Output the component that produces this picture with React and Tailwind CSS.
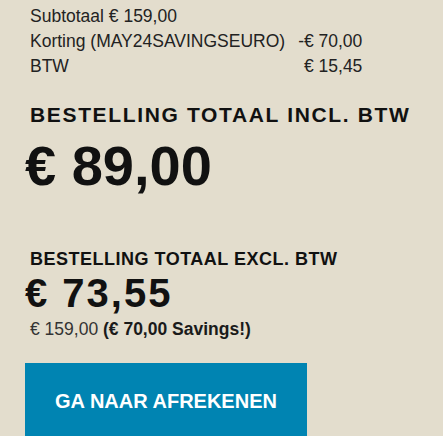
export default function App() {
  return (
    <div
      className="w-full h-[436px] overflow-hidden bg-[#e3ddcd] pl-[25px] text-[#1a1a1a]"
      style={{ fontFamily: '"Liberation Sans", Arial, sans-serif' }}
    >
      <div className="pl-[5px] pt-[4px] grid grid-cols-[auto_auto] w-max text-[17.5px] leading-[25px] text-[#222]">
        <div className="col-span-2">Subtotaal € 159,00</div>
        <div>Korting (MAY24SAVINGSEURO)</div>
        <div className="pl-[13px] text-right">-€ 70,00</div>
        <div>BTW</div>
        <div className="pl-[13px] text-right">€ 15,45</div>
      </div>

      <div className="mt-[24px] pl-[5px] text-[21px] leading-[24px] font-bold tracking-[1.65px] text-[#111]">
        BESTELLING TOTAAL INCL. BTW
      </div>
      <div className="mt-[7px] text-[56px] leading-[64px] font-bold text-[#111]">
        € 89,00
      </div>

      <div className="mt-[50px] pl-[5px] text-[18px] leading-[22px] font-bold tracking-[0.5px] text-[#111]">
        BESTELLING TOTAAL EXCL. BTW
      </div>
      <div className="mt-[1px] text-[40px] leading-[44px] font-bold tracking-[2px] text-[#111]">
        € 73,55
      </div>
      <div className="mt-[2px] pl-[5px] text-[17.5px] leading-[25px]">
        <span className="text-[#333]">€ 159,00 </span>
        <span className="font-bold text-[#1a1a1a]">(€ 70,00 Savings!)</span>
      </div>

      <div className="mt-[21px] w-[282px] h-[75px] bg-[#0084b2] flex items-center justify-center text-white font-bold text-[20px]">
        GA NAAR AFREKENEN
      </div>
    </div>
  );
}
